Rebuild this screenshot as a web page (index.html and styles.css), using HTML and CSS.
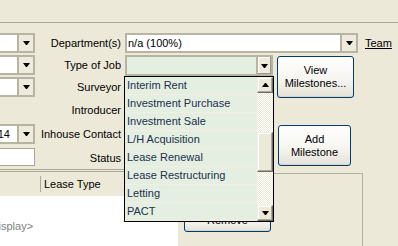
FILE: index.html
```html
<html>
    <head>
        <link rel="stylesheet" href="styles.css">
    </head>
    <body>
        <div class="window">
            <div class="topbar"></div>

            <div class="form">
                <div class="combo left r1"><span class="edit"></span><span class="drop"><i class="down"></i></span></div>
                <div class="label r1">Department(s)</div>
                <div class="combo dept"><span class="edit">n/a (100%)</span><span class="drop"><i class="down"></i></span></div>
                <a class="team" href="#">Team</a>

                <div class="combo left r2"><span class="edit"></span><span class="drop"><i class="down"></i></span></div>
                <div class="label r2">Type of Job</div>
                <div class="combo job"><span class="edit"></span><span class="drop raised"><i class="down"></i></span></div>
                <button class="xp view">View<br/>Milestones...</button>

                <div class="combo left r3"><span class="edit"></span><span class="drop"><i class="down"></i></span></div>
                <div class="label r3">Surveyor</div>
                <div class="combo field r3"><span class="edit"></span><span class="drop"><i class="down"></i></span></div>

                <div class="label r4">Introducer</div>
                <div class="combo field r4"><span class="edit"></span><span class="drop"><i class="down"></i></span></div>

                <div class="combo left r5"><span class="edit date">2014</span><span class="drop"><i class="down"></i></span></div>
                <div class="label r5">Inhouse Contact</div>
                <div class="combo field r5"><span class="edit"></span><span class="drop"><i class="down"></i></span></div>
                <button class="xp add">Add<br/>Milestone</button>

                <div class="textbox r6"></div>
                <div class="label r6">Status</div>
                <div class="combo field r6"><span class="edit"></span><span class="drop"><i class="down"></i></span></div>
            </div>

            <div class="lower">
                <div class="listview">
                    <div class="lv-header">
                        <div class="lv-col first"></div>
                        <div class="lv-col">Lease Type</div>
                    </div>
                    <div class="lv-body">&lt;display&gt;</div>
                </div>
                <div class="side">
                    <div class="frame">
                        <button class="xp remove">Remove</button>
                    </div>
                </div>
            </div>

            <div class="dropdown">
                <ul class="items">
                    <li>Interim Rent</li>
                    <li>Investment Purchase</li>
                    <li>Investment Sale</li>
                    <li>L/H Acquisition</li>
                    <li>Lease Renewal</li>
                    <li>Lease Restructuring</li>
                    <li>Letting</li>
                    <li>PACT</li>
                </ul>
                <div class="scrollbar">
                    <div class="sb-btn"><i class="up"></i></div>
                    <div class="sb-track"><div class="sb-thumb"></div></div>
                    <div class="sb-btn"><i class="down"></i></div>
                </div>
            </div>
        </div>
    </body>
</html>
```

FILE: styles.css
```css
body {
    margin: 0;
    font-family: "Liberation Sans", Arial, sans-serif;
    font-size: 11px;
    color: #000;
    background-color: #ECE9D8;
}
.window {
    position: relative;
    width: 398px;
    height: 246px;
    overflow: hidden;
}
.topbar {
    height: 22px;
    border-bottom: 1px solid #ACA899;
}

/* form grid */
.form {
    display: grid;
    grid-template-columns: 36px 89px 148px 4px 81px auto;
    grid-template-rows: 22px 22px 23px 24px 24px 21px;
    padding-top: 10px;
}
.r1 { grid-row: 1; }
.r2 { grid-row: 2; }
.r3 { grid-row: 3; }
.r4 { grid-row: 4; }
.r5 { grid-row: 5; }
.r6 { grid-row: 6; }
.label {
    grid-column: 2;
    text-align: right;
    padding-right: 4px;
    line-height: 20px;
    white-space: nowrap;
}

/* combo boxes */
.combo {
    display: flex;
    height: 20px;
    box-sizing: border-box;
    border: 2px solid #B7B4A3;
    background-color: #fff;
}
.combo .edit {
    flex: 1;
    line-height: 16px;
    overflow: hidden;
    white-space: nowrap;
}
.combo .drop {
    width: 14px;
    border-left: 2px solid #B7B4A3;
    background-color: #EEEBDD;
    display: flex;
    align-items: center;
    justify-content: center;
}
.combo .drop.raised {
    width: 13px;
    box-shadow: inset -1px -1px 0 #9D9A8A, inset 1px 1px 0 #fff;
}
.left {
    grid-column: 1;
    width: 60px;
    margin-left: -25px;
}
.left .date {
    text-align: right;
    padding-right: 7px;
}
.dept {
    grid-column: 3 / span 3;
    grid-row: 1;
}
.dept .edit {
    padding-left: 1px;
}
.job {
    grid-column: 3;
    grid-row: 2;
    background-color: #E4EFE2;
    height: 21px;
}
.field {
    grid-column: 3;
}
.textbox {
    grid-column: 1;
    width: 60px;
    height: 18px;
    margin-left: -25px;
    box-sizing: border-box;
    border: 1px solid #A9A692;
    background-color: #fff;
}
.team {
    grid-column: 6;
    grid-row: 1;
    margin-left: 7px;
    line-height: 20px;
    color: #000;
    text-decoration: underline;
}

/* arrows */
i.down, i.up {
    display: block;
    width: 1px;
    height: 0;
    border-left: 3px solid transparent;
    border-right: 3px solid transparent;
}
i.down {
    border-top: 4px solid #000;
}
i.up {
    border-bottom: 4px solid #000;
}

/* xp buttons */
button.xp {
    font-family: "Liberation Sans", Arial, sans-serif;
    font-size: 11px;
    line-height: 13px;
    color: #000;
    padding: 0;
    border: 1px solid #003C74;
    border-radius: 3px;
    background: linear-gradient(#FFFFFF 0%, #F6F5F0 55%, #E4E2D8 100%);
    box-shadow: inset 0 -1px 0 #D8D4C6;
}
.view {
    grid-column: 5;
    grid-row: 2 / span 2;
    align-self: start;
    width: 77px;
    height: 42px;
    margin-top: 1px;
}
.add {
    grid-column: 5;
    grid-row: 5 / span 2;
    align-self: start;
    width: 73px;
    height: 41px;
    margin: 1px 0 0 1px;
}

/* lower list area */
.lower {
    display: flex;
}
.listview {
    width: 178px;
    border-top: 3px double #ACA899;
}
.lv-header {
    display: flex;
    height: 24px;
    align-items: center;
}
.lv-col {
    padding-left: 3px;
    line-height: 16px;
}
.lv-col.first {
    width: 40px;
    height: 16px;
    padding: 0;
    border-right: 1px solid #ACA899;
}
.lv-body {
    height: 60px;
    background-color: #fff;
    color: #808080;
    padding-top: 24px;
    margin-left: -14px;
    box-sizing: border-box;
}
.side {
    flex: 1;
}
.frame {
    width: 182px;
    height: 80px;
    margin: 4px 0 0 2px;
    border-top: 1px solid #B4B1A2;
    border-right: 1px solid #B4B1A2;
}
.remove {
    width: 87px;
    height: 23px;
    margin: 35px 0 0 4px;
}

/* open dropdown list */
.dropdown {
    position: absolute;
    left: 124px;
    top: 76px;
    width: 148px;
    height: 144px;
    border: 1px solid #000;
    display: flex;
    background-color: #E4EFE2;
}
.items {
    list-style: none;
    margin: 0;
    padding: 0;
    flex: 1;
}
.items li {
    height: 17px;
    line-height: 17px;
    padding-left: 2px;
    border-bottom: 1px solid #F1EFE4;
    color: #22304D;
    white-space: nowrap;
    overflow: hidden;
}
.scrollbar {
    width: 16px;
    display: flex;
    flex-direction: column;
}
.sb-btn {
    height: 16px;
    box-sizing: border-box;
    background-color: #ECE9D8;
    border: 1px solid;
    border-color: #F1EFE2 #716F64 #716F64 #F1EFE2;
    box-shadow: inset -1px -1px 0 #ACA899, inset 1px 1px 0 #fff;
    display: flex;
    align-items: center;
    justify-content: center;
}
.sb-track {
    flex: 1;
    background-color: #fff;
    background-image: conic-gradient(#ECE9D8 25%, #fff 0 50%, #ECE9D8 0 75%, #fff 0);
    background-size: 2px 2px;
}
.sb-thumb {
    height: 40px;
    margin-top: 39px;
    box-sizing: border-box;
    background-color: #ECE9D8;
    border: 1px solid;
    border-color: #F1EFE2 #716F64 #716F64 #F1EFE2;
    box-shadow: inset -1px -1px 0 #ACA899, inset 1px 1px 0 #fff;
}
```
